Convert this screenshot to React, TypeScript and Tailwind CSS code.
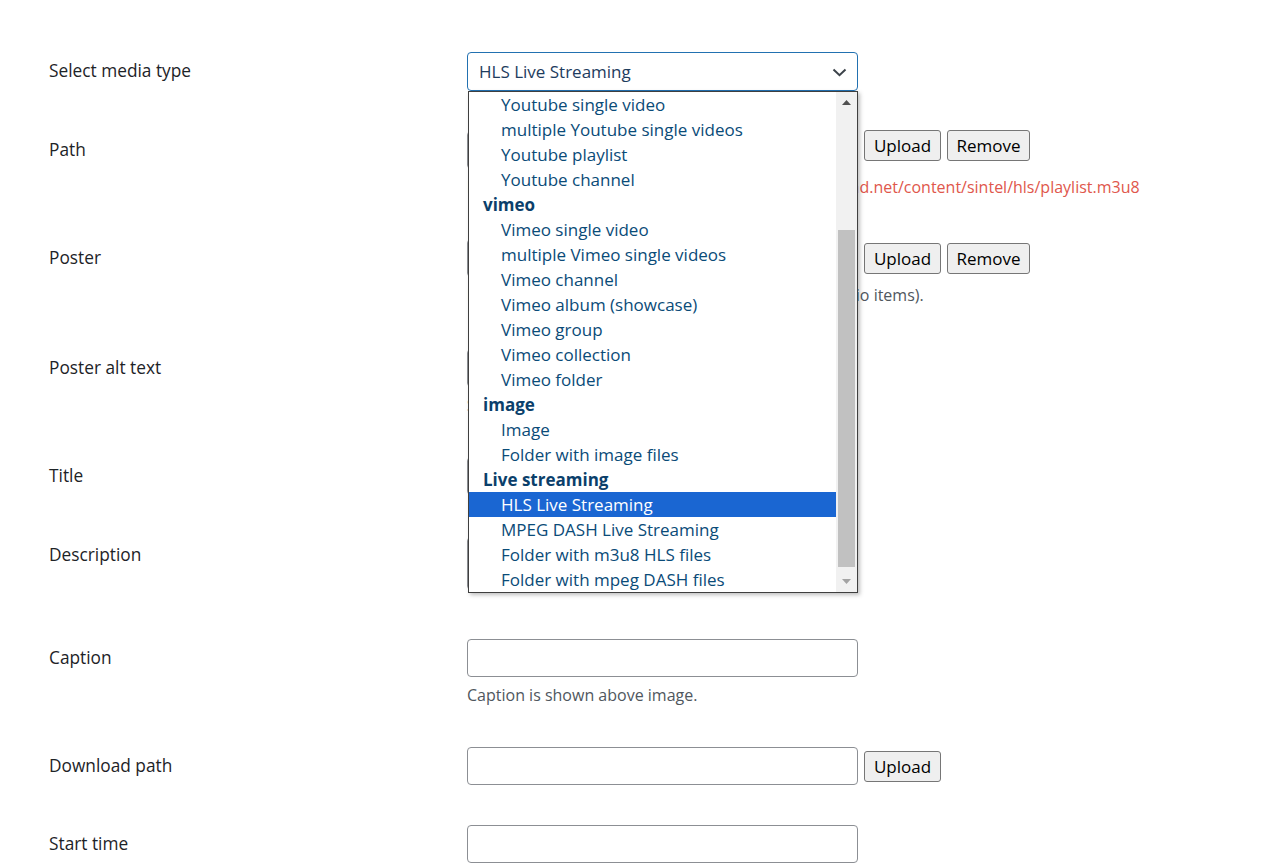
import React from 'react';

type Opt = { text: string; group?: boolean; selected?: boolean };

const options: Opt[] = [
  { text: 'Youtube single video' },
  { text: 'multiple Youtube single videos' },
  { text: 'Youtube playlist' },
  { text: 'Youtube channel' },
  { text: 'vimeo', group: true },
  { text: 'Vimeo single video' },
  { text: 'multiple Vimeo single videos' },
  { text: 'Vimeo channel' },
  { text: 'Vimeo album (showcase)' },
  { text: 'Vimeo group' },
  { text: 'Vimeo collection' },
  { text: 'Vimeo folder' },
  { text: 'image', group: true },
  { text: 'Image' },
  { text: 'Folder with image files' },
  { text: 'Live streaming', group: true },
  { text: 'HLS Live Streaming', selected: true },
  { text: 'MPEG DASH Live Streaming' },
  { text: 'Folder with m3u8 HLS files' },
  { text: 'Folder with mpeg DASH files' },
];

function Label({ children, pt = 'pt-[7px]' }: { children: React.ReactNode; pt?: string }) {
  return (
    <div className={`w-[418px] shrink-0 text-[17.3px] leading-[24px] text-[#1d2327] ${pt}`}>{children}</div>
  );
}

function TextInput() {
  return <div className="w-[391px] h-[38px] shrink-0 rounded-[4px] border border-[#8c8f94] bg-white" />;
}

function Btn({ children, w }: { children: React.ReactNode; w: string }) {
  return (
    <button className={`${w} h-[31px] rounded-[3px] border border-[#767676] bg-[#efefef] text-[17px] leading-none text-black`}>
      {children}
    </button>
  );
}

function Desc({ children, red }: { children: React.ReactNode; red?: boolean }) {
  return (
    <p className={`mt-[7px] text-[16px] leading-[22px] whitespace-nowrap ${red ? 'text-[#e0574c]' : 'text-[#50575e]'}`}>
      {children}
    </p>
  );
}

export default function App() {
  return (
    <div
      className="relative w-full h-[865px] overflow-hidden bg-white pl-[49px] pt-[52px]"
      style={{ fontFamily: '"Open Sans", "Noto Sans", sans-serif' }}
    >
      {/* Select media type */}
      <div className="flex">
        <Label>Select media type</Label>
        <div className="w-[391px] h-[39px] rounded-[4px] border-[1.5px] border-[#2271b1] bg-white flex items-center justify-between pl-[11px] pr-[10px]">
          <span className="text-[17px] text-[#1e3c5e]">HLS Live Streaming</span>
          <svg width="15" height="9" viewBox="0 0 15 9" className="mt-[1px]">
            <polyline points="1.5,1.5 7.5,7.2 13.5,1.5" fill="none" stroke="#3c434a" strokeWidth="2" />
          </svg>
        </div>
      </div>

      {/* Path */}
      <div className="flex mt-[40px]">
        <Label>Path</Label>
        <div>
          <div className="flex items-start gap-[6px]">
            <TextInput />
            <div className="flex gap-[6px] -mt-px">
              <Btn w="w-[77px]">Upload</Btn>
              <Btn w="w-[83px]">Remove</Btn>
            </div>
          </div>
          <Desc red>HLS stream URL, example: https://bitdash-a.akamaihd.net/content/sintel/hls/playlist.m3u8</Desc>
        </div>
      </div>

      {/* Poster */}
      <div className="flex mt-[41px]">
        <Label>Poster</Label>
        <div>
          <div className="flex items-center gap-[6px]">
            <TextInput />
            <Btn w="w-[77px]">Upload</Btn>
            <Btn w="w-[83px]">Remove</Btn>
          </div>
          <Desc>Poster image shown before playback (video and audio items).</Desc>
        </div>
      </div>

      {/* Poster alt text */}
      <div className="flex mt-[43px]">
        <Label>Poster alt text</Label>
        <div>
          <TextInput />
          <Desc>Set alternative text for the poster image.</Desc>
        </div>
      </div>

      {/* Title */}
      <div className="flex mt-[41px]">
        <Label>Title</Label>
        <TextInput />
      </div>

      {/* Description */}
      <div className="flex mt-[42px]">
        <Label pt="pt-[6px]">Description</Label>
        <div className="w-[391px] h-[53px] rounded-[4px] border border-[#8c8f94] bg-white" />
      </div>

      {/* Caption */}
      <div className="flex mt-[49px]">
        <Label>Caption</Label>
        <div>
          <TextInput />
          <Desc>Caption is shown above image.</Desc>
        </div>
      </div>

      {/* Download path */}
      <div className="flex mt-[41px]">
        <Label>Download path</Label>
        <div className="flex items-center gap-[6px]">
          <TextInput />
          <Btn w="w-[77px]">Upload</Btn>
        </div>
      </div>

      {/* Start time */}
      <div className="flex mt-[40px]">
        <Label>Start time</Label>
        <TextInput />
      </div>

      {/* Open dropdown list */}
      <div className="absolute left-[468px] top-[91px] w-[390px] h-[502px] border border-[#3f3f3f] bg-white flex shadow-[2px_2px_4px_rgba(0,0,0,0.25)]">
        <div className="flex-1 flex flex-col">
          {options.map(o => (
            <div
              key={o.text}
              className={`h-[25px] shrink-0 flex items-center text-[17px] leading-none whitespace-nowrap ${
                o.group
                  ? 'pl-[14px] font-bold text-[#0b3f6b]'
                  : o.selected
                    ? 'pl-[32px] bg-[#1a66d2] text-white'
                    : 'pl-[32px] text-[#0a4b78]'
              }`}
            >
              {o.text}
            </div>
          ))}
        </div>
        {/* scrollbar */}
        <div className="w-[21px] shrink-0 bg-[#f1f1f1] flex flex-col">
          <div className="h-[21px] flex items-center justify-center">
            <svg width="9" height="5" viewBox="0 0 9 5">
              <polygon points="0,5 4.5,0 9,5" fill="#505050" />
            </svg>
          </div>
          <div className="h-[117px]" />
          <div className="h-[337px] mx-[2px] bg-[#c1c1c1]" />
          <div className="h-[4px]" />
          <div className="h-[21px] flex items-center justify-center">
            <svg width="9" height="5" viewBox="0 0 9 5">
              <polygon points="0,0 4.5,5 9,0" fill="#a3a3a3" />
            </svg>
          </div>
        </div>
      </div>
    </div>
  );
}
